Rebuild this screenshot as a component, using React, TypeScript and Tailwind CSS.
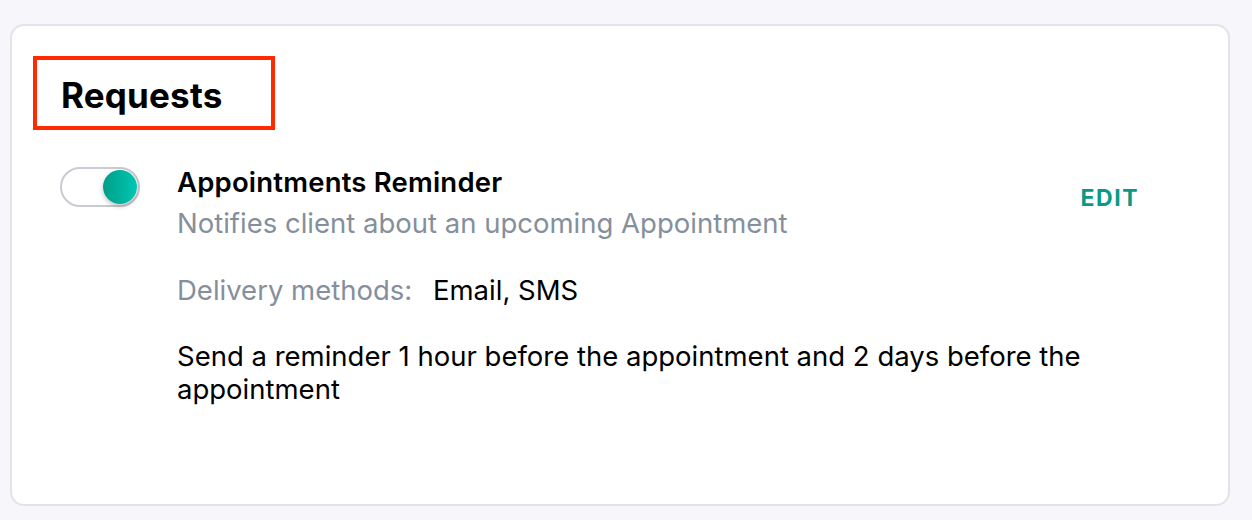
import React from "react";

export default function App() {
  return (
    <div
      className="w-[1252px] h-[520px] bg-[#f7f7fb] pt-[24px] pl-[10px] pr-[22px]"
      style={{ fontFamily: "Inter, 'Noto Sans', sans-serif" }}
    >
      <div className="h-[482px] rounded-[14px] border-2 border-[#e3e3eb] bg-white pt-[30px] pl-[21px]">
        <div className="w-[242px] h-[74px] border-[4px] border-[#ff2a00] flex items-center pl-[24px]">
          <h2 className="text-[35px] font-bold text-black leading-none mt-[4px] tracking-[0.2px]">Requests</h2>
        </div>
        <div className="flex mt-[36px] pl-[27px]">
          <button className="relative w-[80px] h-[40px] rounded-full border-2 border-[#cacad2] bg-white shrink-0 mt-[1px]">
            <span className="absolute right-[1px] top-[1px] w-[34px] h-[34px] rounded-full bg-gradient-to-r from-[#009e88] to-[#00c7b3] shadow-[0_2px_5px_rgba(0,0,0,0.25)]"></span>
          </button>
          <div className="ml-[37px] flex-1 flex">
            <div className="w-[860px]">
              <div className="text-[27.5px] font-semibold text-black leading-[32px] tracking-[0.2px]">Appointments Reminder</div>
              <div className="text-[27.5px] text-[#858f9c] leading-[32px] mt-[9px]">Notifies client about an upcoming Appointment</div>
              <div className="flex text-[27.5px] leading-[32px] mt-[35px]">
                <span className="text-[#858f9c] w-[256px]">Delivery methods:</span>
                <span className="text-black">Email, SMS</span>
              </div>
              <div className="text-[27.5px] leading-[33px] text-black mt-[34px] w-[915px]">
                Send a reminder 1 hour before the appointment and 2 days before the appointment
              </div>
            </div>
            <div className="ml-auto pr-[89px] pt-[21px]">
              <button className="text-[23px] font-bold tracking-[1.5px] text-[#0a9985] leading-none">EDIT</button>
            </div>
          </div>
        </div>
      </div>
    </div>
  );
}
